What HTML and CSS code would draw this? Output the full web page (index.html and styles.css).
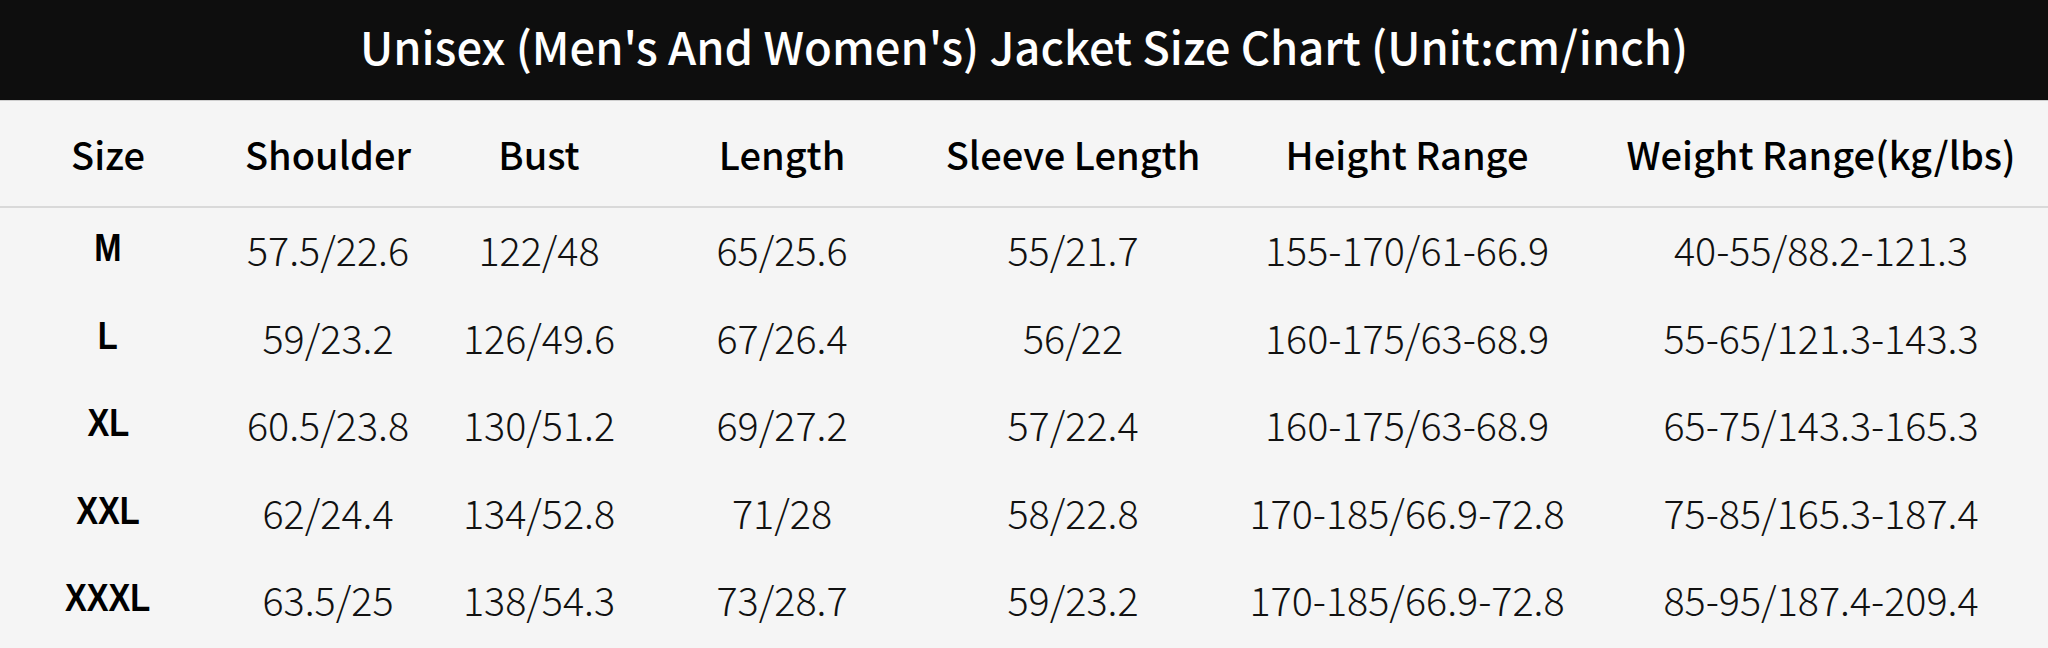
FILE: index.html
```html
<!DOCTYPE html>
<html>
<head>
<meta charset="utf-8">
<link rel="stylesheet" href="styles.css">
</head>
<body>
<div class="chart">
  <div class="title">Unisex (Men's And Women's) Jacket Size Chart (Unit:cm/inch)</div>
  <div class="row head">
    <div>Size</div><div>Shoulder</div><div>Bust</div><div>Length</div><div>Sleeve Length</div><div>Height Range</div><div>Weight Range(kg/lbs)</div>
  </div>
  <div class="body">
    <div class="row data">
      <div class="size">M</div><div>57.5/22.6</div><div>122/48</div><div>65/25.6</div><div>55/21.7</div><div>155-170/61-66.9</div><div>40-55/88.2-121.3</div>
    </div>
    <div class="row data">
      <div class="size">L</div><div>59/23.2</div><div>126/49.6</div><div>67/26.4</div><div>56/22</div><div>160-175/63-68.9</div><div>55-65/121.3-143.3</div>
    </div>
    <div class="row data">
      <div class="size">XL</div><div>60.5/23.8</div><div>130/51.2</div><div>69/27.2</div><div>57/22.4</div><div>160-175/63-68.9</div><div>65-75/143.3-165.3</div>
    </div>
    <div class="row data">
      <div class="size">XXL</div><div>62/24.4</div><div>134/52.8</div><div>71/28</div><div>58/22.8</div><div>170-185/66.9-72.8</div><div>75-85/165.3-187.4</div>
    </div>
    <div class="row data">
      <div class="size">XXXL</div><div>63.5/25</div><div>138/54.3</div><div>73/28.7</div><div>59/23.2</div><div>170-185/66.9-72.8</div><div>85-95/187.4-209.4</div>
    </div>
  </div>
</div>
</body>
</html>
```

FILE: styles.css
```css
html, body {
  margin: 0;
  padding: 0;
  background: #f5f5f5;
}
.chart {
  width: 2048px;
  height: 648px;
  overflow: hidden;
  background: #f5f5f5;
  color: #000;
}
.title {
  height: 101px;
  background: #0e0e0e;
  color: #fff;
  border-bottom: 1px solid #cfcfcf;
  display: flex;
  align-items: center;
  justify-content: center;
  font-family: "Noto Sans CJK SC", "Noto Sans", sans-serif;
  font-weight: 500;
  font-size: 45.4px;
  padding-bottom: 10px;
  box-sizing: border-box;
}
.row {
  display: grid;
  grid-template-columns: 216px 224px 198px 288px 294px 374px 454px;
  align-items: center;
  justify-items: center;
}
.head {
  height: 107px;
  border-bottom: 2px solid #d9d9d9;
  box-sizing: border-box;
  font-family: "Noto Sans CJK SC", "Noto Sans", sans-serif;
  font-weight: 500;
  font-size: 38px;
}
.data {
  height: 87.5px;
  padding-bottom: 6px;
  box-sizing: border-box;
  font-family: "Noto Sans CJK SC", "Noto Sans", sans-serif;
  font-weight: 300;
  font-size: 39.5px;
  color: #111;
}
.data .size {
  font-family: "Liberation Sans", Arial, sans-serif;
  font-weight: 700;
  font-size: 38px;
  color: #000;
  transform: scaleX(0.86);
}
```
